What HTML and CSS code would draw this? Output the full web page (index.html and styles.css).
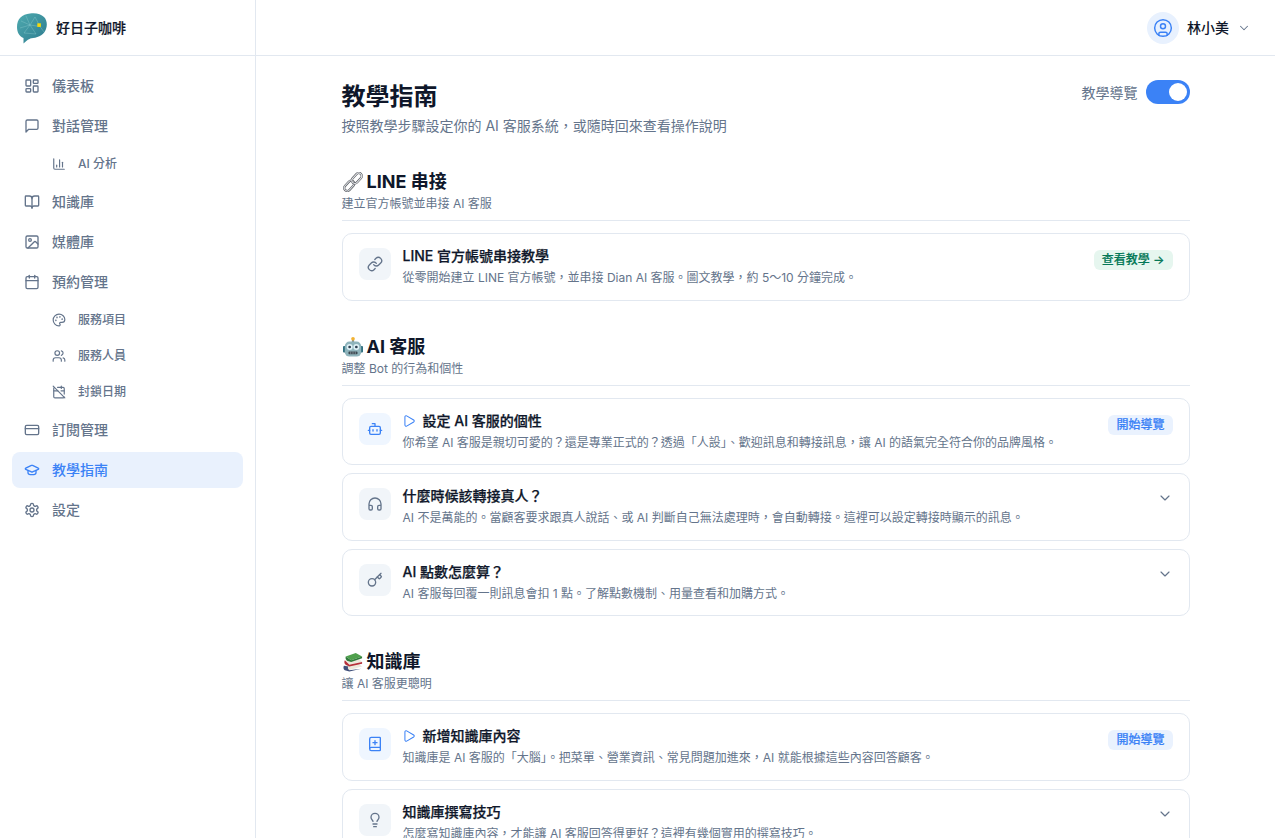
FILE: index.html
```html
<!DOCTYPE html>
<html lang="zh-Hant">
<head>
    <meta charset="UTF-8">
    <meta name="viewport" content="width=device-width, initial-scale=1.0">
    <title>教學指南</title>
    <link rel="stylesheet" href="styles.css">
</head>
<body>

    <!-- Icon sprite -->
    <svg class="sprite" xmlns="http://www.w3.org/2000/svg">
        <symbol id="i-dashboard" viewBox="0 0 24 24"><rect x="3" y="3" width="7" height="9" rx="1"/><rect x="14" y="3" width="7" height="5" rx="1"/><rect x="14" y="12" width="7" height="9" rx="1"/><rect x="3" y="16" width="7" height="5" rx="1"/></symbol>
        <symbol id="i-message" viewBox="0 0 24 24"><path d="M21 15a2 2 0 0 1-2 2H7l-4 4V5a2 2 0 0 1 2-2h14a2 2 0 0 1 2 2z"/></symbol>
        <symbol id="i-chart" viewBox="0 0 24 24"><path d="M3 3v16a2 2 0 0 0 2 2h16"/><path d="M18 17V9"/><path d="M13 17V5"/><path d="M8 17v-3"/></symbol>
        <symbol id="i-book" viewBox="0 0 24 24"><path d="M12 7v14"/><path d="M3 18a1 1 0 0 1-1-1V4a1 1 0 0 1 1-1h5a4 4 0 0 1 4 4 4 4 0 0 1 4-4h5a1 1 0 0 1 1 1v13a1 1 0 0 1-1 1h-6a3 3 0 0 0-3 3 3 3 0 0 0-3-3z"/></symbol>
        <symbol id="i-image" viewBox="0 0 24 24"><rect x="3" y="3" width="18" height="18" rx="2"/><circle cx="9" cy="9" r="2"/><path d="m21 15-3.086-3.086a2 2 0 0 0-2.828 0L6 21"/></symbol>
        <symbol id="i-calendar" viewBox="0 0 24 24"><path d="M8 2v4"/><path d="M16 2v4"/><rect x="3" y="4" width="18" height="18" rx="2"/><path d="M3 10h18"/></symbol>
        <symbol id="i-palette" viewBox="0 0 24 24"><path d="M12 22a1 1 0 0 1 0-20 10 9 0 0 1 10 9 5 5 0 0 1-5 5h-2.25a1.75 1.75 0 0 0-1.4 2.8l.3.4a1.75 1.75 0 0 1-1.4 2.8z"/><circle cx="13.5" cy="6.5" r=".5"/><circle cx="17.5" cy="10.5" r=".5"/><circle cx="6.5" cy="12.5" r=".5"/><circle cx="8.5" cy="7.5" r=".5"/></symbol>
        <symbol id="i-users" viewBox="0 0 24 24"><path d="M16 21v-2a4 4 0 0 0-4-4H6a4 4 0 0 0-4 4v2"/><circle cx="9" cy="7" r="4"/><path d="M22 21v-2a4 4 0 0 0-3-3.87"/><path d="M16 3.13a4 4 0 0 1 0 7.75"/></symbol>
        <symbol id="i-calendar-off" viewBox="0 0 24 24"><path d="M4.2 4.2A2 2 0 0 0 3 6v14a2 2 0 0 0 2 2h14a2 2 0 0 0 1.82-1.18"/><path d="M21 15.5V6a2 2 0 0 0-2-2H9.5"/><path d="M16 2v4"/><path d="M3 10h7"/><path d="M21 10h-5.5"/><path d="m2 2 20 20"/></symbol>
        <symbol id="i-card" viewBox="0 0 24 24"><rect x="2" y="5" width="20" height="14" rx="2"/><path d="M2 10h20"/></symbol>
        <symbol id="i-cap" viewBox="0 0 24 24"><path d="M21.42 10.922a1 1 0 0 0-.019-1.838L12.83 5.18a2 2 0 0 0-1.66 0L2.6 9.08a1 1 0 0 0 0 1.832l8.57 3.908a2 2 0 0 0 1.66 0z"/><path d="M6 12.5V16a6 3 0 0 0 12 0v-3.5"/></symbol>
        <symbol id="i-gear" viewBox="0 0 24 24"><path d="M12.22 2h-.44a2 2 0 0 0-2 2v.18a2 2 0 0 1-1 1.73l-.43.25a2 2 0 0 1-2 0l-.15-.08a2 2 0 0 0-2.73.73l-.22.38a2 2 0 0 0 .73 2.73l.15.1a2 2 0 0 1 1 1.72v.51a2 2 0 0 1-1 1.74l-.15.09a2 2 0 0 0-.73 2.73l.22.38a2 2 0 0 0 2.73.73l.15-.08a2 2 0 0 1 2 0l.43.25a2 2 0 0 1 1 1.73V20a2 2 0 0 0 2 2h.44a2 2 0 0 0 2-2v-.18a2 2 0 0 1 1-1.73l.43-.25a2 2 0 0 1 2 0l.15.08a2 2 0 0 0 2.73-.73l.22-.39a2 2 0 0 0-.73-2.73l-.15-.08a2 2 0 0 1-1-1.74v-.5a2 2 0 0 1 1-1.74l.15-.09a2 2 0 0 0 .73-2.73l-.22-.38a2 2 0 0 0-2.73-.73l-.15.08a2 2 0 0 1-2 0l-.43-.25a2 2 0 0 1-1-1.73V4a2 2 0 0 0-2-2z"/><circle cx="12" cy="12" r="3"/></symbol>
        <symbol id="i-user" viewBox="0 0 24 24"><circle cx="12" cy="12" r="10"/><circle cx="12" cy="10" r="3"/><path d="M7 20.662V19a2 2 0 0 1 2-2h6a2 2 0 0 1 2 2v1.662"/></symbol>
        <symbol id="i-chevron" viewBox="0 0 24 24"><path d="m6 9 6 6 6-6"/></symbol>
        <symbol id="i-link" viewBox="0 0 24 24"><path d="M10 13a5 5 0 0 0 7.54.54l3-3a5 5 0 0 0-7.07-7.07l-1.72 1.71"/><path d="M14 11a5 5 0 0 0-7.54-.54l-3 3a5 5 0 0 0 7.07 7.07l1.71-1.71"/></symbol>
        <symbol id="i-bot" viewBox="0 0 24 24"><path d="M12 8V4H8"/><rect x="4" y="8" width="16" height="12" rx="2"/><path d="M2 14h2"/><path d="M20 14h2"/><path d="M15 13v2"/><path d="M9 13v2"/></symbol>
        <symbol id="i-headphones" viewBox="0 0 24 24"><path d="M3 14h3a2 2 0 0 1 2 2v3a2 2 0 0 1-2 2H5a2 2 0 0 1-2-2v-7a9 9 0 0 1 18 0v7a2 2 0 0 1-2 2h-1a2 2 0 0 1-2-2v-3a2 2 0 0 1 2-2h3"/></symbol>
        <symbol id="i-key" viewBox="0 0 24 24"><path d="m15.5 7.5 2.3 2.3a1 1 0 0 0 1.4 0l2.1-2.1a1 1 0 0 0 0-1.4L19 4"/><path d="m21 2-9.6 9.6"/><circle cx="7.5" cy="15.5" r="5.5"/></symbol>
        <symbol id="i-book-plus" viewBox="0 0 24 24"><path d="M12 7v6"/><path d="M15 10H9"/><path d="M4 19.5v-15A2.5 2.5 0 0 1 6.5 2H19a1 1 0 0 1 1 1v18a1 1 0 0 1-1 1H6.5a1 1 0 0 1 0-5H20"/></symbol>
        <symbol id="i-bulb" viewBox="0 0 24 24"><path d="M15 14c.2-1 .7-1.7 1.5-2.5 1-.9 1.5-2.2 1.5-3.5A6 6 0 0 0 6 8c0 1 .2 2.2 1.5 3.5.7.7 1.3 1.5 1.5 2.5"/><path d="M9 18h6"/><path d="M10 22h4"/></symbol>
        <symbol id="i-play" viewBox="0 0 24 24"><path d="M5 5a2 2 0 0 1 3-1.7l12 7a2 2 0 0 1 0 3.4l-12 7A2 2 0 0 1 5 19z"/></symbol>
    </svg>

    <div class="app">

        <!-- Sidebar -->
        <aside class="sidebar">
            <div class="brand">
                <svg class="brand-logo" viewBox="0 0 30 31" xmlns="http://www.w3.org/2000/svg">
                    <defs>
                        <linearGradient id="logoFill" x1="0" y1="0" x2="1" y2="1">
                            <stop offset="0" stop-color="#4fabb0"/>
                            <stop offset="1" stop-color="#2c7a8e"/>
                        </linearGradient>
                    </defs>
                    <path d="M6.500 30.500 L6.500 25 C2 23 0 19 0 14 C0 6 5 1 13 .5 C19 -.3 24 1 27 4 C30 7 30.500 12 29 16 C27.500 21 22 24.500 16 25 C13 25.300 11.500 26 6.500 30.500 Z" fill="url(#logoFill)"/>
                    <path d="M4 8 L13 12 L23 13.500 M7 20 L13 12 L18 4 M13 12 L19 21 M9 3 L13 12 M3 15 L13 12 M23 13.500 L27 19 M18 4 L23 13.500 M7 20 L19 21" stroke="#a6dcdc" stroke-width=".45" fill="none" opacity=".65"/>
                    <rect x="20.300" y="10.300" width="3.600" height="3.600" fill="#f5d90a"/>
                </svg>
                <span class="brand-name">好日子咖啡</span>
            </div>
            <nav class="nav">
                <a class="nav-item"><svg class="ic"><use href="#i-dashboard"/></svg><span>儀表板</span></a>
                <a class="nav-item"><svg class="ic"><use href="#i-message"/></svg><span>對話管理</span></a>
                <a class="nav-sub"><svg class="ic-sm"><use href="#i-chart"/></svg><span>AI 分析</span></a>
                <a class="nav-item"><svg class="ic"><use href="#i-book"/></svg><span>知識庫</span></a>
                <a class="nav-item"><svg class="ic"><use href="#i-image"/></svg><span>媒體庫</span></a>
                <a class="nav-item"><svg class="ic"><use href="#i-calendar"/></svg><span>預約管理</span></a>
                <a class="nav-sub"><svg class="ic-sm"><use href="#i-palette"/></svg><span>服務項目</span></a>
                <a class="nav-sub"><svg class="ic-sm"><use href="#i-users"/></svg><span>服務人員</span></a>
                <a class="nav-sub"><svg class="ic-sm"><use href="#i-calendar-off"/></svg><span>封鎖日期</span></a>
                <a class="nav-item"><svg class="ic"><use href="#i-card"/></svg><span>訂閱管理</span></a>
                <a class="nav-item active"><svg class="ic"><use href="#i-cap"/></svg><span>教學指南</span></a>
                <a class="nav-item"><svg class="ic"><use href="#i-gear"/></svg><span>設定</span></a>
            </nav>
        </aside>

        <div class="main">

            <!-- Topbar -->
            <header class="topbar">
                <div class="avatar"><svg class="ic-avatar"><use href="#i-user"/></svg></div>
                <span class="user-name">林小美</span>
                <svg class="ic-user-chevron"><use href="#i-chevron"/></svg>
            </header>

            <main class="content">
                <div class="page-head">
                    <div>
                        <h1>教學指南</h1>
                        <p class="page-sub">按照教學步驟設定你的 AI 客服系統，或隨時回來查看操作說明</p>
                    </div>
                    <div class="tour-toggle">
                        <span>教學導覽</span>
                        <span class="switch"><span class="knob"></span></span>
                    </div>
                </div>

                <!-- LINE 串接 -->
                <section class="section">
                    <div class="section-head">
                        <h2>
                            <svg class="emoji" viewBox="0 0 22 22" xmlns="http://www.w3.org/2000/svg">
                                <g fill="none" stroke-linecap="round">
                                    <rect x="-6.500" y="-3.300" width="13" height="6.600" rx="3.300" transform="translate(6.800 15.200) rotate(-48)" stroke="#4c4f55" stroke-width="2.500"/>
                                    <rect x="-6.500" y="-3.300" width="13" height="6.600" rx="3.300" transform="translate(6.800 15.200) rotate(-48)" stroke="#d6d9dd" stroke-width="1.200"/>
                                    <rect x="-6.500" y="-3.300" width="13" height="6.600" rx="3.300" transform="translate(15.200 6.800) rotate(-48)" stroke="#4c4f55" stroke-width="2.500"/>
                                    <rect x="-6.500" y="-3.300" width="13" height="6.600" rx="3.300" transform="translate(15.200 6.800) rotate(-48)" stroke="#e4e6e9" stroke-width="1.200"/>
                                </g>
                            </svg><span>LINE 串接</span>
                        </h2>
                        <p>建立官方帳號並串接 AI 客服</p>
                    </div>
                    <div class="cards">
                        <div class="card">
                            <div class="card-icon"><svg class="ic"><use href="#i-link"/></svg></div>
                            <div class="card-text">
                                <div class="card-title">LINE 官方帳號串接教學</div>
                                <p class="card-desc">從零開始建立 LINE 官方帳號，並串接 Dian AI 客服。圖文教學，約 5～10 分鐘完成。</p>
                            </div>
                            <span class="tag tag-green">查看教學 →</span>
                        </div>
                    </div>
                </section>

                <!-- AI 客服 -->
                <section class="section">
                    <div class="section-head">
                        <h2>
                            <svg class="emoji" viewBox="0 0 22 22" xmlns="http://www.w3.org/2000/svg">
                                <rect x="9.800" y="2.500" width="2.400" height="3.500" fill="#7b8a94"/>
                                <circle cx="11" cy="2" r="2" fill="#f2b233"/>
                                <rect x="0" y="10" width="3.500" height="7" rx="1" fill="#2f6f7f"/>
                                <rect x="18.500" y="10" width="3.500" height="7" rx="1" fill="#2f6f7f"/>
                                <rect x="2" y="5" width="18" height="16.500" rx="5" fill="#8fb4bc"/>
                                <circle cx="7.300" cy="11" r="3.300" fill="#dff1f6"/>
                                <circle cx="14.700" cy="11" r="3.300" fill="#dff1f6"/>
                                <circle cx="7.300" cy="11" r="1.500" fill="#2c3e50"/>
                                <circle cx="14.700" cy="11" r="1.500" fill="#2c3e50"/>
                                <rect x="6" y="16" width="10" height="3" rx="1" fill="#3a4750"/>
                                <path d="M8.500 16v3M11 16v3M13.500 16v3" stroke="#b8c4ca" stroke-width=".6"/>
                            </svg><span>AI 客服</span>
                        </h2>
                        <p>調整 Bot 的行為和個性</p>
                    </div>
                    <div class="cards">
                        <div class="card">
                            <div class="card-icon blue"><svg class="ic"><use href="#i-bot"/></svg></div>
                            <div class="card-text">
                                <div class="card-title"><svg class="ic-play"><use href="#i-play"/></svg>設定 AI 客服的個性</div>
                                <p class="card-desc">你希望 AI 客服是親切可愛的？還是專業正式的？透過「人設」、歡迎訊息和轉接訊息，讓 AI 的語氣完全符合你的品牌風格。</p>
                            </div>
                            <span class="tag tag-blue">開始導覽</span>
                        </div>
                        <div class="card">
                            <div class="card-icon"><svg class="ic"><use href="#i-headphones"/></svg></div>
                            <div class="card-text">
                                <div class="card-title">什麼時候該轉接真人？</div>
                                <p class="card-desc">AI 不是萬能的。當顧客要求跟真人說話、或 AI 判斷自己無法處理時，會自動轉接。這裡可以設定轉接時顯示的訊息。</p>
                            </div>
                            <svg class="ic-chevron"><use href="#i-chevron"/></svg>
                        </div>
                        <div class="card">
                            <div class="card-icon"><svg class="ic"><use href="#i-key"/></svg></div>
                            <div class="card-text">
                                <div class="card-title">AI 點數怎麼算？</div>
                                <p class="card-desc">AI 客服每回覆一則訊息會扣 1 點。了解點數機制、用量查看和加購方式。</p>
                            </div>
                            <svg class="ic-chevron"><use href="#i-chevron"/></svg>
                        </div>
                    </div>
                </section>

                <!-- 知識庫 -->
                <section class="section">
                    <div class="section-head">
                        <h2>
                            <svg class="emoji" viewBox="0 0 22 22" xmlns="http://www.w3.org/2000/svg">
                                <path d="M1 15 L16 12 L21 16 L6 20 Z" fill="#ece8dc"/>
                                <path d="M1 15 C0 17 .5 19 2 20 L7 21.500 L20 18.500 L7 20 C5 19 5 17 6 16 Z" fill="#3f4f7a"/>
                                <path d="M2 9 L18 8 L21 11 L7 14 Z" fill="#ece8dc"/>
                                <path d="M2 9 C1 11 1.500 13 3 14 L7 16 L21 13 L21 11 L7 14 Z" fill="#b5303a"/>
                                <path d="M3 5 L14 1 L21 5 L9 9 Z" fill="#4fa04c"/>
                                <path d="M3 5 C2.500 7 3 8.500 4.500 9.500 L9 11 L21 7 L21 5 L9 9 Z" fill="#2f7a3a"/>
                            </svg><span>知識庫</span>
                        </h2>
                        <p>讓 AI 客服更聰明</p>
                    </div>
                    <div class="cards">
                        <div class="card">
                            <div class="card-icon blue"><svg class="ic"><use href="#i-book-plus"/></svg></div>
                            <div class="card-text">
                                <div class="card-title"><svg class="ic-play"><use href="#i-play"/></svg>新增知識庫內容</div>
                                <p class="card-desc">知識庫是 AI 客服的「大腦」。把菜單、營業資訊、常見問題加進來，AI 就能根據這些內容回答顧客。</p>
                            </div>
                            <span class="tag tag-blue">開始導覽</span>
                        </div>
                        <div class="card">
                            <div class="card-icon"><svg class="ic"><use href="#i-bulb"/></svg></div>
                            <div class="card-text">
                                <div class="card-title">知識庫撰寫技巧</div>
                                <p class="card-desc">怎麼寫知識庫內容，才能讓 AI 客服回答得更好？這裡有幾個實用的撰寫技巧。</p>
                            </div>
                            <svg class="ic-chevron"><use href="#i-chevron"/></svg>
                        </div>
                    </div>
                </section>
            </main>
        </div>
    </div>

</body>
</html>
```

FILE: styles.css
```css
* { box-sizing: border-box; }
html, body { height: 100%; }
body { margin: 0; background: #fff; color: #0f172a; font-family: Inter, "Noto Sans CJK TC", sans-serif; overflow: hidden; }
h1, h2, p { margin: 0; }
svg { flex-shrink: 0; }
.sprite { display: none; }
.ic, .ic-sm, .ic-avatar, .ic-chevron, .ic-user-chevron, .ic-play { fill: none; stroke: currentColor; stroke-width: 2; stroke-linecap: round; stroke-linejoin: round; }

.app { display: flex; height: 100vh; }

/* sidebar */
.sidebar { width: 256px; flex-shrink: 0; border-right: 1px solid #e2e8f0; }
.brand { display: flex; align-items: center; gap: 9px; height: 56px; padding-left: 17px; border-bottom: 1px solid #e2e8f0; }
.brand-logo { width: 30px; height: 31px; margin-top: 1px; }
.brand-name { margin-bottom: 2px; font-size: 14px; font-weight: 500; color: #0f172a; -webkit-text-stroke: .2px; }
.nav { display: flex; flex-direction: column; gap: 4px; padding: 12px; }
.nav-item { display: flex; align-items: center; gap: 12px; height: 36px; padding-left: 12px; border-radius: 8px; font-size: 14px; font-weight: 500; color: #64748b; }
.nav-item .ic { width: 16px; height: 16px; }
.nav-sub { display: flex; align-items: center; gap: 12px; height: 32px; padding-left: 40px; font-size: 12px; font-weight: 500; color: #64748b; }
.nav-item span { margin-bottom: 2px; }
.nav-sub span { margin-bottom: 4px; }
.ic-sm { width: 14px; height: 14px; }
.nav-item.active { background: #e9f1fd; color: #3b82f6; }

/* topbar */
.main { flex: 1; min-width: 0; }
.topbar { display: flex; align-items: center; justify-content: flex-end; height: 56px; padding-right: 24px; border-bottom: 1px solid #e2e8f0; }
.avatar { display: flex; align-items: center; justify-content: center; width: 32px; height: 32px; border-radius: 50%; background: #e8f1fe; color: #3b82f6; }
.ic-avatar { width: 20px; height: 20px; stroke-width: 1.75; }
.user-name { margin: 0 0 2px 8px; font-size: 14px; font-weight: 500; }
.ic-user-chevron { width: 14px; height: 14px; margin-left: 8px; color: #64748b; stroke-width: 1.75; }

/* content */
.content { max-width: 896px; margin: 0 auto; padding: 24px 24px 0; }
.page-head { display: flex; justify-content: space-between; align-items: flex-start; margin-bottom: 32px; }
h1 { padding-top: 1px; font-size: 24px; line-height: 32px; font-weight: 700; }
.page-sub { margin-top: 3px; font-size: 14px; line-height: 20px; color: #64748b; }
.tour-toggle { display: flex; align-items: center; gap: 8px; font-size: 14px; color: #64748b; }
.switch { display: flex; align-items: center; justify-content: flex-end; width: 44px; height: 24px; padding-right: 3px; border-radius: 12px; background: #3b82f6; }
.knob { width: 18px; height: 18px; border-radius: 50%; background: #fff; }

.section { margin-bottom: 32px; }
.section-head { padding-bottom: 8px; border-bottom: 1px solid #e2e8f0; margin-bottom: 12px; }
.section-head h2 { display: flex; align-items: center; font-size: 18px; line-height: 28px; font-weight: 700; }
.section-head p { font-size: 12px; line-height: 16px; color: #64748b; }
.emoji { width: 20px; height: 20px; margin: 0 4px 0 1px; }

.cards { display: flex; flex-direction: column; gap: 8px; }
.card { display: flex; align-items: flex-start; gap: 12px; height: 67.5px; padding: 14px 16px; border: 1px solid #e2e8f0; border-radius: 10px; background: #fff; }
.card-icon { display: flex; align-items: center; justify-content: center; width: 32px; height: 32px; border-radius: 8px; background: #f1f5f9; color: #64748b; }
.card-icon .ic { width: 16px; height: 16px; }
.card-icon.blue { background: #eff6ff; color: #3b82f6; }
.card-text { flex: 1; min-width: 0; margin-top: -1px; }
.card-title { display: flex; align-items: center; gap: 7px; font-size: 14px; line-height: 18px; font-weight: 500; color: #0f172a; -webkit-text-stroke: .25px; }
.ic-play { width: 14px; height: 14px; margin-left: -1px; color: #3b82f6; stroke-width: 1.75; }
.card-desc { margin-top: 5px; font-size: 12px; line-height: 16px; color: #64748b; }
.tag { margin-top: 2px; padding: 2px 8px; border-radius: 6px; font-size: 12px; line-height: 16px; font-weight: 500; white-space: nowrap; -webkit-text-stroke: .2px; }
.tag-green { background: #e6f6ef; color: #047857; }
.tag-blue { background: #eaf2fe; color: #3b82f6; }
.ic-chevron { width: 16px; height: 16px; margin-top: 2px; color: #64748b; stroke-width: 1.75; }
```
